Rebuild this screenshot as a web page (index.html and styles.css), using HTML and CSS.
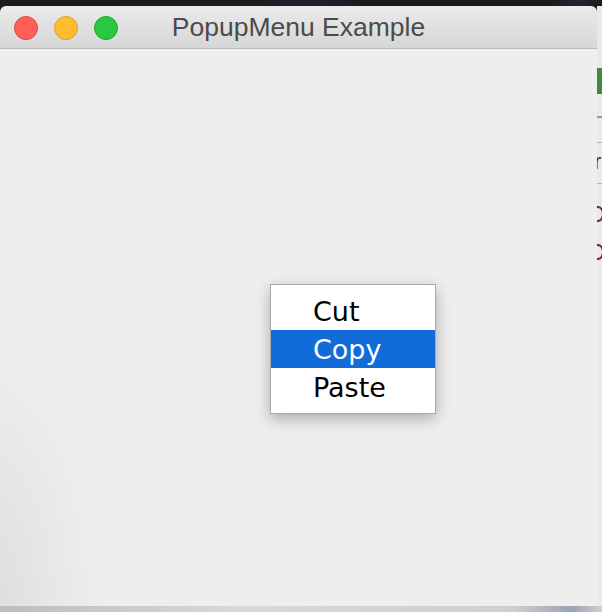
FILE: index.html
```html
<!DOCTYPE html>
<html>
<head>
<meta charset="utf-8">
<link rel="stylesheet" href="styles.css">
</head>
<body>
<div class="desk">
  <div class="top-strip"></div>
  <div class="main-row">
    <div class="window">
      <div class="titlebar">
        <div class="lights">
          <span class="light red"></span>
          <span class="light yellow"></span>
          <span class="light green"></span>
        </div>
        <div class="title">PopupMenu Example</div>
      </div>
      <div class="content">
        <div class="popup">
          <div class="item">Cut</div>
          <div class="item selected">Copy</div>
          <div class="item">Paste</div>
        </div>
      </div>
    </div>
    <div class="side">
      <div class="side-green"></div>
      <div class="side-line"></div>
      <div class="side-line second"></div>
      <div class="side-text">r</div>
      <div class="side-line third"></div>
      <div class="side-arc"></div>
      <div class="side-arc"></div>
    </div>
  </div>
  <div class="bottom-strip"></div>
</div>
</body>
</html>
```
FILE: styles.css
```css
html, body {
  margin: 0;
  padding: 0;
}
body {
  width: 602px;
  height: 612px;
  overflow: hidden;
  background: #1c1c1e;
}
.desk {
  display: flex;
  flex-direction: column;
  width: 602px;
  height: 612px;
}
.top-strip {
  height: 6px;
  flex: none;
  background: linear-gradient(90deg, #1a1a1c 0%, #1d1d22 45%, #202034 50%, #1b1b1d 60%, #1b1b1d 92%, #22223a 96%, #1b1b1d 100%);
}
.main-row {
  display: flex;
  height: 600px;
  flex: none;
}
.window {
  width: 597px;
  flex: none;
  display: flex;
  flex-direction: column;
  border-radius: 6px 6px 0 0;
  overflow: hidden;
  box-shadow: 1px 1px 0 #9a9a9a;
}
.titlebar {
  height: 42px;
  flex: none;
  position: relative;
  background: linear-gradient(#ebebeb, #d6d6d6);
  border-bottom: 1px solid #b9b9b9;
  display: flex;
  align-items: center;
  justify-content: center;
}
.lights {
  position: absolute;
  left: 14px;
  top: 10px;
  display: flex;
  gap: 16px;
}
.light {
  width: 24px;
  height: 24px;
  border-radius: 50%;
  box-sizing: border-box;
}
.red { background: #fe5f57; border: 1px solid #e0443e; }
.yellow { background: #febc2e; border: 1px solid #dea123; }
.green { background: #29c840; border: 1px solid #1aab29; }
.title {
  font-family: "Liberation Sans", Arial, sans-serif;
  font-size: 26.5px;
  color: #4b4b4b;
  margin-top: 1px;
}
.content {
  flex: 1;
  position: relative;
  background: radial-gradient(ellipse 120px 260px at -20px 560px, #dcdcdc, rgba(238,238,238,0) 100%), #eeeeee;
}
.popup {
  position: absolute;
  left: 270px;
  top: 235px;
  width: 164px;
  padding: 7px 0 7px;
  background: #ffffff;
  border: 1px solid #a8a8a8;
  box-shadow: 0 5px 14px rgba(0, 0, 0, 0.28);
}
.item {
  height: 38px;
  line-height: 40px;
  padding-left: 42px;
  font-family: "DejaVu Sans", "Lucida Grande", sans-serif;
  font-size: 27px;
  color: #000000;
}
.item.selected {
  background: #116cd9;
  color: #ffffff;
}
.side {
  flex: 1;
  background: #e9e9e9;
  display: flex;
  flex-direction: column;
  overflow: hidden;
}
.side-green {
  height: 26px;
  margin-top: 62px;
  background: #3f8a3c;
}
.side-line {
  height: 2px;
  margin-top: 22px;
  background: #9a9a9a;
}
.side-line.second {
  height: 1px;
  margin-top: 24px;
  background: #b5b5b5;
}
.side-text {
  margin-top: 6px;
  font-family: "Liberation Sans", sans-serif;
  font-size: 22px;
  color: #222;
  margin-left: -3px;
  width: 8px;
}
.side-line.third {
  height: 1px;
  margin-top: 8px;
  background: #b5b5b5;
}
.side-arc {
  width: 8px;
  height: 12px;
  margin-top: 22px;
  margin-left: -5px;
  border: 2px solid #7b1f4f;
  border-radius: 50%;
}
.bottom-strip {
  flex: 1;
  background: linear-gradient(90deg, #bdbdbd, #d8d8d8 40%, #cfcfcf 85%, #9aa3b5 95%, #cfcfcf);
}
```
